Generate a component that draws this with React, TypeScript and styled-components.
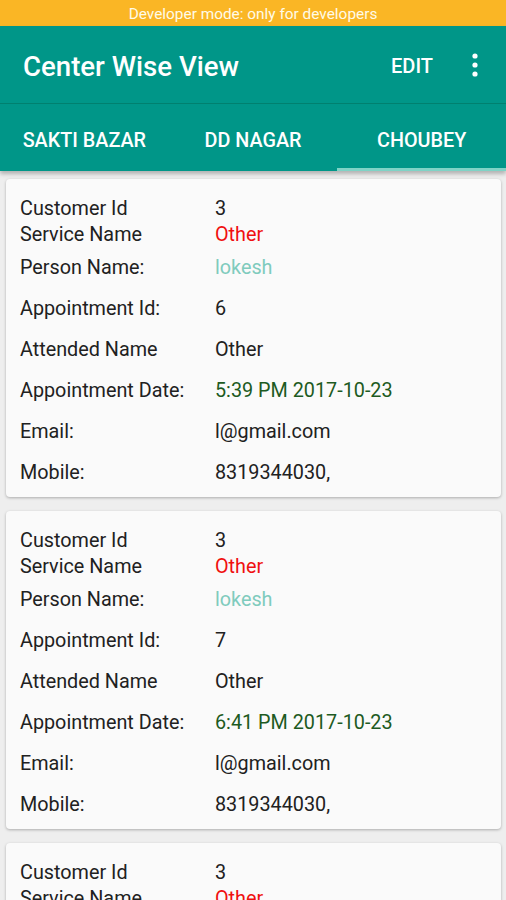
import React from "react";
import styled, { createGlobalStyle } from "styled-components";

const Global = createGlobalStyle`
  html, body { margin: 0; padding: 0; background: #eeeeee; }
  body { font-family: Roboto, "Liberation Sans", Arial, sans-serif; }
  * { box-sizing: border-box; }
`;

const Page = styled.div`
  width: 506px;
  height: 900px;
  overflow: hidden;
  background: #eeeeee;
  display: flex;
  flex-direction: column;
  & > * { flex-shrink: 0; }
`;

const DevBar = styled.div`
  height: 26px;
  background: #fab625;
  color: #fffbe8;
  font-size: 15.4px;
  display: flex;
  align-items: center;
  justify-content: center;
  padding-top: 2px;
`;

const Header = styled.div`
  background: #009688;
  box-shadow: 0 3px 4px rgba(0, 0, 0, 0.25);
  position: relative;
  z-index: 2;
`;

const Toolbar = styled.div`
  height: 78px;
  display: flex;
  align-items: center;
  padding-left: 23px;
  padding-top: 3px;
  border-bottom: 1px solid #00806f;
  color: #ffffff;
`;

const Title = styled.div`
  flex: 1;
  font-size: 27.6px;
  font-weight: 500;
`;

const Action = styled.div`
  font-size: 20px;
  font-weight: 500;
  margin-right: 37px;
`;

const MenuIcon = styled.svg`
  width: 10px;
  height: 26px;
  margin-right: 26px;
  margin-bottom: 3px;
`;

const Tabs = styled.div`
  height: 67px;
  display: flex;
`;

const Tab = styled.div<{ $active?: boolean }>`
  flex: 1;
  display: flex;
  align-items: center;
  justify-content: center;
  color: #ffffff;
  font-size: 19.8px;
  font-weight: 500;
  border-bottom: 3px solid ${(p) => (p.$active ? "#7fd3c6" : "transparent")};
  padding-top: 8px;
`;

const List = styled.div`
  display: flex;
  flex-direction: column;
  gap: 14px;
  padding: 8px 5px 0 6px;
  & > * { flex-shrink: 0; }
`;

const Card = styled.div`
  background: #fafafa;
  border-radius: 4px;
  box-shadow: 0 1px 3px rgba(0, 0, 0, 0.28);
  padding: 16px 14px 4px 14px;
`;

const Row = styled.div<{ $tight?: boolean }>`
  height: ${(p) => (p.$tight ? 26 : 41)}px;
  display: flex;
  align-items: center;
  font-size: 19.8px;
  color: #212121;
  white-space: nowrap;
`;

const Label = styled.div`
  width: 195px;
`;

const Value = styled.div<{ $color?: string }>`
  color: ${(p) => p.$color || "#212121"};
`;

type Item = { apptId: string; date: string };

const items: Item[] = [
  { apptId: "6", date: "5:39 PM 2017-10-23" },
  { apptId: "7", date: "6:41 PM 2017-10-23" },
  { apptId: "8", date: "6:41 PM 2017-10-23" },
];

export default function App() {
  return (
    <Page>
      <Global />
      <DevBar>Developer mode: only for developers</DevBar>
      <Header>
        <Toolbar>
          <Title>Center Wise View</Title>
          <Action>EDIT</Action>
          <MenuIcon viewBox="0 0 10 26">
            <circle cx="5" cy="4" r="2.6" fill="#fff" />
            <circle cx="5" cy="13" r="2.6" fill="#fff" />
            <circle cx="5" cy="22" r="2.6" fill="#fff" />
          </MenuIcon>
        </Toolbar>
        <Tabs>
          <Tab>SAKTI BAZAR</Tab>
          <Tab>DD NAGAR</Tab>
          <Tab $active>CHOUBEY</Tab>
        </Tabs>
      </Header>
      <List>
        {items.map((it, i) => (
          <Card key={i}>
            <Row $tight>
              <Label>Customer Id</Label>
              <Value>3</Value>
            </Row>
            <Row $tight>
              <Label>Service Name</Label>
              <Value $color="#f01010">Other</Value>
            </Row>
            <Row>
              <Label>Person Name:</Label>
              <Value $color="#7fcbbd">lokesh</Value>
            </Row>
            <Row>
              <Label>Appointment Id:</Label>
              <Value>{it.apptId}</Value>
            </Row>
            <Row>
              <Label>Attended Name</Label>
              <Value>Other</Value>
            </Row>
            <Row>
              <Label>Appointment Date:</Label>
              <Value $color="#1d5a22">{it.date}</Value>
            </Row>
            <Row>
              <Label>Email:</Label>
              <Value>l@gmail.com</Value>
            </Row>
            <Row>
              <Label>Mobile:</Label>
              <Value>8319344030,</Value>
            </Row>
          </Card>
        ))}
      </List>
    </Page>
  );
}
